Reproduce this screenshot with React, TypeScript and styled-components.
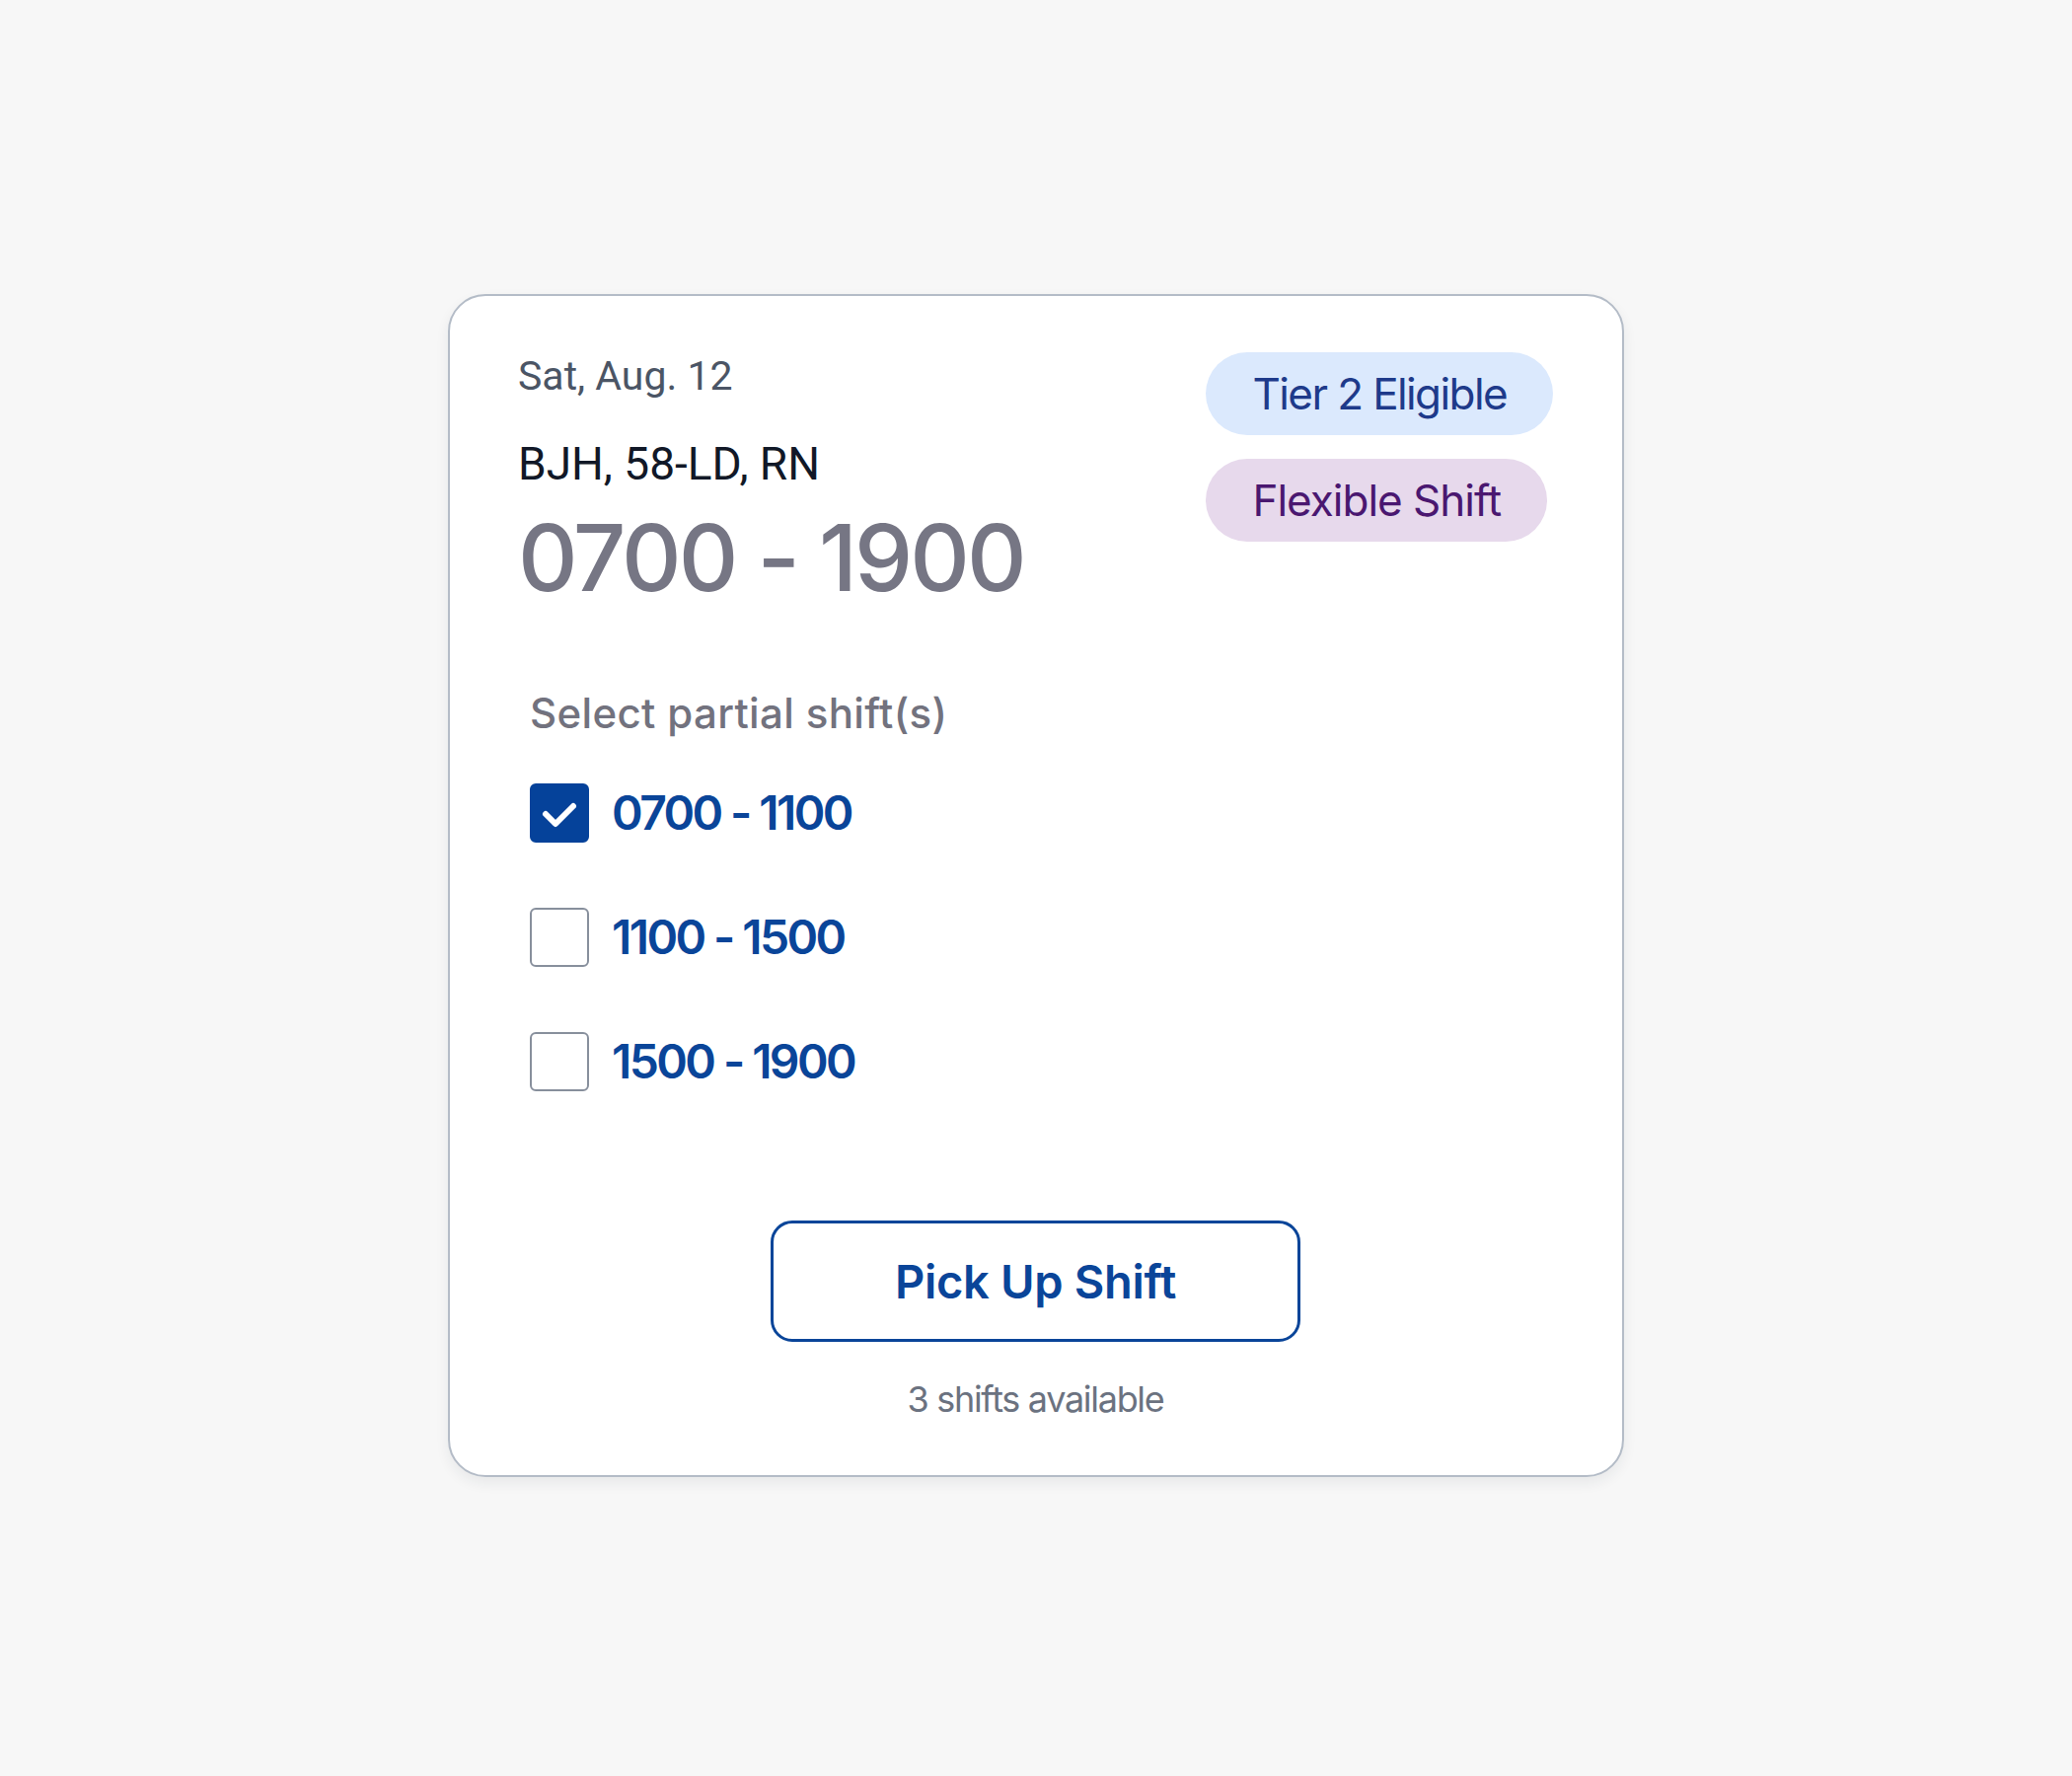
import React, { useState } from "react";
import styled, { createGlobalStyle } from "styled-components";

const GlobalStyle = createGlobalStyle`
  html, body {
    margin: 0;
    padding: 0;
    background: #f7f7f7;
  }
  body {
    font-family: Inter, "Noto Sans", sans-serif;
  }
`;

const Page = styled.main`
  padding-top: 298px;
  padding-bottom: 200px;
`;

const Card = styled.section`
  box-sizing: border-box;
  width: 1192px;
  margin: 0 auto;
  background: #ffffff;
  border: 2px solid #b4bcc7;
  border-radius: 38px;
  box-shadow: 0 6px 14px rgba(30, 40, 60, 0.07);
  padding: 57px 70px 55px 69px;
  display: flex;
  flex-direction: column;
`;

const Header = styled.header`
  display: flex;
  justify-content: space-between;
  align-items: flex-start;
`;

const Info = styled.div`
  display: flex;
  flex-direction: column;
`;

const DateText = styled.div`
  font-family: Roboto, Inter, sans-serif;
  font-size: 41px;
  line-height: 48px;
  color: #4b5565;
`;

const Location = styled.div`
  margin-top: 41px;
  font-family: Roboto, Inter, sans-serif;
  font-size: 46px;
  line-height: 48px;
  color: #111827;
`;

const TimeRange = styled.div`
  margin-top: 24px;
  font-family: Inter, sans-serif;
  font-size: 94px;
  line-height: 94px;
  font-weight: 500;
  color: #767684;
  letter-spacing: -3px;
`;

const Badges = styled.div`
  display: flex;
  flex-direction: column;
  align-items: flex-start;
  gap: 24px;
`;

const Badge = styled.span<{ $bg: string; $fg: string; $track: number }>`
  display: inline-flex;
  align-items: center;
  height: 84px;
  padding: 0 47px;
  border-radius: 42px;
  background: ${(p) => p.$bg};
  color: ${(p) => p.$fg};
  font-family: Inter, sans-serif;
  font-size: 44px;
  letter-spacing: ${(p) => p.$track}px;
`;

const Partial = styled.section`
  margin-top: 87px;
  padding-left: 12px;
  display: flex;
  flex-direction: column;
`;

const PartialTitle = styled.h2`
  margin: 0 0 47px;
  font-family: Inter, sans-serif;
  font-size: 42px;
  line-height: 48px;
  font-weight: 500;
  color: #72727e;
  letter-spacing: 0.35px;
`;

const OptionList = styled.div`
  display: flex;
  flex-direction: column;
  gap: 66px;
`;

const Option = styled.label`
  display: flex;
  align-items: center;
  gap: 23px;
  height: 60px;
  cursor: pointer;
`;

const Box = styled.span<{ $checked: boolean }>`
  box-sizing: border-box;
  width: 60px;
  height: 60px;
  border-radius: 6px;
  display: flex;
  align-items: center;
  justify-content: center;
  background: ${(p) => (p.$checked ? "#05429a" : "#ffffff")};
  border: 2px solid ${(p) => (p.$checked ? "#05429a" : "#878f9c")};
`;

const Check = styled.svg`
  width: 60px;
  height: 60px;
  flex: none;
`;

const OptionText = styled.span`
  font-family: Inter, sans-serif;
  font-size: 48px;
  line-height: 60px;
  font-weight: 600;
  color: #0a4599;
  letter-spacing: -2.6px;
`;

const Footer = styled.footer`
  margin-top: 131px;
  display: flex;
  flex-direction: column;
  align-items: center;
`;

const Button = styled.button`
  box-sizing: border-box;
  width: 537px;
  height: 123px;
  border: 3px solid #0a4599;
  border-radius: 22px;
  background: #ffffff;
  color: #0a4599;
  font-family: Inter, sans-serif;
  font-size: 47px;
  font-weight: 600;
  letter-spacing: -0.3px;
  cursor: pointer;
`;

const Available = styled.div`
  margin-top: 36px;
  font-family: Inter, sans-serif;
  font-size: 36px;
  line-height: 44px;
  color: #6b7280;
  letter-spacing: -1.3px;
`;

const options = ["0700 - 1100", "1100 - 1500", "1500 - 1900"];

export default function App() {
  const [selected, setSelected] = useState<Record<string, boolean>>({
    "0700 - 1100": true,
  });

  return (
    <>
      <GlobalStyle />
      <Page>
        <Card>
          <Header>
            <Info>
              <DateText>Sat, Aug. 12</DateText>
              <Location>BJH, 58-LD, RN</Location>
              <TimeRange>0700 - 1900</TimeRange>
            </Info>
            <Badges>
              <Badge $bg="#dbe9fd" $fg="#1e3a8a" $track={-1.6}>
                Tier 2 Eligible
              </Badge>
              <Badge $bg="#e7d9ec" $fg="#4a1770" $track={-1}>
                Flexible Shift
              </Badge>
            </Badges>
          </Header>
          <Partial>
            <PartialTitle>Select partial shift(s)</PartialTitle>
            <OptionList>
              {options.map((o) => (
                <Option
                  key={o}
                  onClick={() => setSelected((s) => ({ ...s, [o]: !s[o] }))}
                >
                  <Box $checked={!!selected[o]}>
                    {selected[o] && (
                      <Check viewBox="0 0 60 60">
                        <polyline
                          points="16,31 26,41 44,23"
                          fill="none"
                          stroke="#ffffff"
                          strokeWidth="6"
                          strokeLinecap="round"
                          strokeLinejoin="round"
                        />
                      </Check>
                    )}
                  </Box>
                  <OptionText>{o}</OptionText>
                </Option>
              ))}
            </OptionList>
          </Partial>
          <Footer>
            <Button type="button">Pick Up Shift</Button>
            <Available>3 shifts available</Available>
          </Footer>
        </Card>
      </Page>
    </>
  );
}
